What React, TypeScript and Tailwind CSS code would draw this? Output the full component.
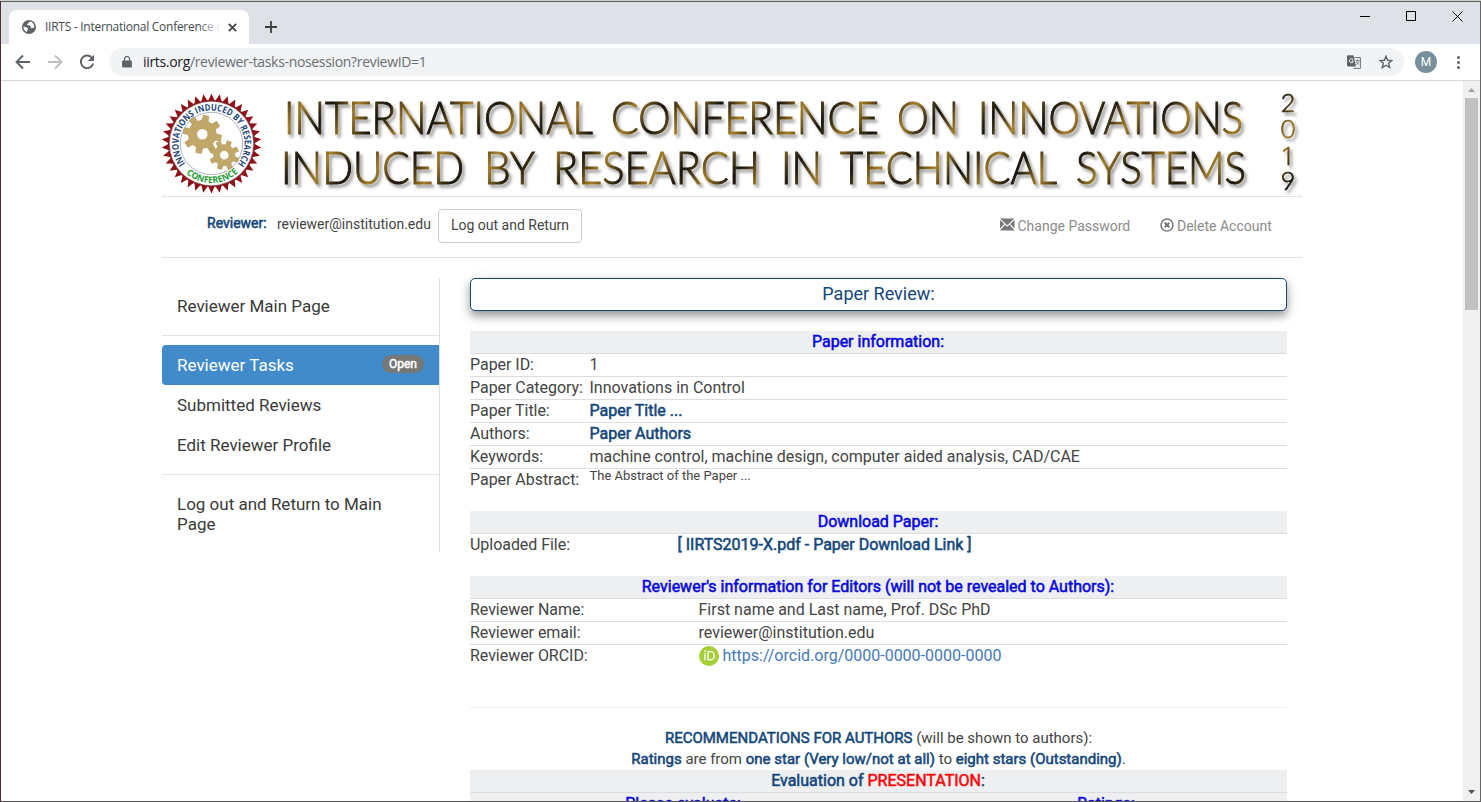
import React from "react";

const BOLD = "[-webkit-text-stroke:0.55px]";

function gearPath(cx: number, cy: number, teeth: number, outer: number, root: number, hole: number, turn: number) {
  const pts: string[] = [];
  const step = (Math.PI * 2) / teeth;
  for (let i = 0; i < teeth; i++) {
    const a = turn + i * step;
    const corners: [number, number][] = [
      [root, a - step * 0.3],
      [outer, a - step * 0.19],
      [outer, a + step * 0.19],
      [root, a + step * 0.3],
    ];
    corners.forEach(([r, t]) => pts.push(`${(cx + r * Math.cos(t)).toFixed(2)} ${(cy + r * Math.sin(t)).toFixed(2)}`));
  }
  return `M${pts.join("L")}ZM${cx - hole} ${cy}a${hole} ${hole} 0 1 0 ${hole * 2} 0a${hole} ${hole} 0 1 0 ${-hole * 2} 0Z`;
}

function sealPath(cx: number, cy: number, teeth: number, outer: number, root: number) {
  const pts: string[] = [];
  for (let i = 0; i < teeth * 2; i++) {
    const a = -Math.PI / 2 + (i * Math.PI) / teeth;
    const r = i % 2 ? root : outer;
    pts.push(`${(cx + r * Math.cos(a)).toFixed(2)} ${(cy + r * Math.sin(a)).toFixed(2)}`);
  }
  return `M${pts.join("L")}Z`;
}

const WORDS: [string, number, number, number][] = [
  ["INTERNATIONAL", 284, 309, 133.5],
  ["CONFERENCE", 611, 268, 133.5],
  ["ON", 897, 62, 133.5],
  ["INNOVATIONS", 978, 265, 133.5],
  ["INDUCED", 281, 183, 184],
  ["BY", 484, 51, 184],
  ["RESEARCH", 553, 207, 184],
  ["IN", 781, 41, 184],
  ["TECHNICAL", 840, 217, 184],
  ["SYSTEMS", 1076, 170, 184],
];

const YEAR: [string, number][] = [["2", 112], ["0", 138], ["1", 164.5], ["9", 190]];

function Banner() {
  return (
    <svg width="1140" height="115" viewBox="162 81 1140 115" className="block shrink-0">
      <defs>
        <linearGradient id="gold" gradientUnits="userSpaceOnUse" x1="0" y1="0" x2="21" y2="12" spreadMethod="reflect">
          <stop offset="0" stopColor="#15130d" />
          <stop offset="0.35" stopColor="#3d3012" />
          <stop offset="0.7" stopColor="#7a5b1b" />
          <stop offset="1" stopColor="#a47e2c" />
        </linearGradient>
        <filter id="drop" x="-5%" y="-20%" width="110%" height="150%">
          <feDropShadow dx="2.5" dy="3" stdDeviation="1.6" floodColor="#000" floodOpacity="0.42" />
        </filter>
        <path id="arcTop" d="M185.300 163.600A33 33 0 1 1 237.700 163.600" />
        <path id="arcBottom" d="M175.500 159.750A39.500 39.500 0 0 0 247.500 159.750" />
      </defs>
      <path d={sealPath(211.5, 143.5, 38, 50, 42.4)} fill="#8f1218" />
      <circle cx="211.5" cy="143.5" r="43.6" fill="#8f1218" />
      <circle cx="211.5" cy="143.5" r="42" fill="#fff" stroke="#8b95a5" strokeWidth="0.5" />
      <circle cx="211.5" cy="143.5" r="31.2" fill="none" stroke="#8b95a5" strokeWidth="0.7" />
      <g fill="#c2a868" fillRule="evenodd" stroke="#a98f50" strokeWidth="0.5">
        <path d={gearPath(202.3, 134.3, 8, 19.3, 14, 5.6, 0.2)} />
        <path d={gearPath(224.3, 155.2, 8, 14.8, 10.6, 4.6, 0.35)} />
      </g>
      <g fontFamily="Open Sans, sans-serif" fontSize="9.2" fontWeight="700">
        <text fill="#23457b">
          <textPath href="#arcTop" textLength="147" lengthAdjust="spacingAndGlyphs">INNOVATIONS INDUCED BY RESEARCH</textPath>
        </text>
        <text fill="#1f9a35" fontSize="9">
          <textPath href="#arcBottom" startOffset="17.500" textLength="57" lengthAdjust="spacingAndGlyphs">CONFERENCE</textPath>
        </text>
      </g>
      <g fill="url(#gold)" stroke="url(#gold)" strokeWidth="1" filter="url(#drop)" fontFamily="Lato, sans-serif" fontWeight="300">
        {WORDS.map(([word, x, w, y]) => (
          <text key={word} x={x} y={y} fontSize="45.2" textLength={w} lengthAdjust="spacingAndGlyphs">{word}</text>
        ))}
        {YEAR.map(([n, y]) => (
          <text key={n} x="1288" y={y} fontSize="25" strokeWidth="0.7" textAnchor="middle" fontFamily={n === "1" ? "Open Sans, sans-serif" : "Lato, sans-serif"}>{n}</text>
        ))}
      </g>
    </svg>
  );
}

function Browser() {
  return (
    <div className="shrink-0 font-['Open_Sans',sans-serif]">
      <div className="flex h-[42px] bg-[#dee1e6] pl-2">
        <div className="mt-2 flex h-[34px] w-[240px] items-center rounded-t-lg bg-white pl-[13px]">
          <svg width="14" height="14" viewBox="0 0 14 14">
            <circle cx="7" cy="7" r="7" fill="#5f6368" />
            <path d="M8.2 1.5c-.5.8-2 1-2 1.800c0 .8-1.200.6-1.200 1.400 0 1 2.800.3 3.600 1.500.7 1-.4 1.800.600 2 .9.2 1.500-.7 2.800-.3 1-2.500-.7-5.800-3.800-6.400zM1.500 6.500c1.500.2 2.500.7 3.600 1.200 1.200.5 1 1.500.4 2.200-.5.6-.2 1.500-.5 2.200C2.800 11.300 1.200 9 1.500 6.500z" fill="#fff" />
          </svg>
          <div className="relative ml-[9px] w-[176px] overflow-hidden whitespace-nowrap text-[12px] leading-4 tracking-[-0.27px] text-[#45494d]">
            IIRTS - International Conference on
            <div className="absolute inset-y-0 right-0 w-[22px] bg-gradient-to-r from-transparent to-white" />
          </div>
          <svg className="ml-[7px]" width="9" height="9" viewBox="0 0 9 9" stroke="#3c4043" strokeWidth="1.7">
            <path d="M.8.8l7.400 7.400M8.200.8L.8 8.200" />
          </svg>
        </div>
        <svg className="ml-[16px] mt-[19px]" width="12" height="12" viewBox="0 0 12 12" stroke="#3c4043" strokeWidth="1.8">
          <path d="M6 0v12M0 6h12" />
        </svg>
        <div className="ml-auto flex items-start gap-[36px] pr-[17px] pt-[9px]">
          <svg width="10" height="10" viewBox="0 0 10 10" stroke="#000"><path d="M0 5.500h10" /></svg>
          <svg width="10" height="10" viewBox="0 0 10 10" stroke="#000" fill="none"><path d="M.5.5h9v9h-9z" /></svg>
          <svg width="11" height="11" viewBox="0 0 11 11" stroke="#000"><path d="M.5.5l10 10M10.500.5L.5 10.500" /></svg>
        </div>
      </div>
      <div className="flex h-[37px] items-center border-b border-[#d5d7da] bg-white pl-[14px]">
        <svg width="16" height="16" viewBox="0 0 16 16" fill="none" stroke="#5f6368" strokeWidth="1.9"><path d="M15 8H2M8 1.500L1.500 8L8 14.500" /></svg>
        <svg className="ml-4" width="16" height="16" viewBox="0 0 16 16" fill="none" stroke="#bcbec1" strokeWidth="1.900"><path d="M1 8h13M8 1.500L14.500 8L8 14.500" /></svg>
        <svg className="ml-4" width="16" height="16" viewBox="0 0 16 16"><path d="M13.300 4.200A6.300 6.300 0 1 0 14.200 9.500" fill="none" stroke="#5f6368" strokeWidth="1.900" /><path d="M15 .8v6.200H8.800z" fill="#5f6368" /></svg>
        <div className="ml-[14px] flex h-7 w-[1295px] items-center rounded-full bg-[#f1f3f4] pl-[13px]">
          <svg width="10" height="12" viewBox="0 0 10 12"><path d="M1 4.500h8a.9.9 0 0 1 .9.900v5.200a.9.9 0 0 1-.9.900H1a.9.9 0 0 1-.9-.9V5.400a.9.9 0 0 1 .9-.9z" fill="#5f6368" /><path d="M2.500 5V3a2.500 2.500 0 0 1 5 0v2" fill="none" stroke="#5f6368" strokeWidth="1.200" /></svg>
          <div className="ml-[11px] whitespace-nowrap text-[14px] leading-5 tracking-[-0.33px] text-[#6b6f73]">
            <span className="text-[#202124]">iirts.org</span>/reviewer-tasks-nosession?reviewID=1
          </div>
          <svg className="ml-auto" width="14" height="14" viewBox="0 0 14 14">
            <path d="M7.500 2.600h5.900v10.800H6.500" fill="#f1f3f4" stroke="#6b6f73" />
            <path d="M0 1.200A1 1 0 0 1 1 .2h5.400l2.700 11.200H1a1 1 0 0 1-1-1z" fill="#5f6368" />
            <path d="M6 4.500a2 2 0 1 0 .4 1.500H4.500" fill="none" stroke="#fff" strokeWidth=".9" />
            <path d="M8.700 5.500h3.800M10.500 4.500v1M9 6c.4 1.500 1.500 2.800 3 3.500M12 6c-.4 1.700-1.400 3-2.700 3.800" fill="none" stroke="#6b6f73" strokeWidth=".8" />
          </svg>
          <svg className="ml-[18px] mr-[11px]" width="14" height="14" viewBox="0 0 14 14" fill="none" stroke="#5f6368" strokeWidth="1.400"><path d="M7 1.300l1.600 4 4.300.3-3.300 2.700 1.100 4.200L7 10.200l-3.700 2.300 1.100-4.200L1.100 5.600l4.300-.3z" /></svg>
        </div>
        <div className="ml-[11px] flex size-[22px] items-center justify-center rounded-full bg-[#78909c] font-['Roboto',sans-serif] text-[12px] text-white">M</div>
        <div className="ml-[20px] flex flex-col gap-[2px]">
          <span className="size-[3px] rounded-full bg-[#5f6368]" />
          <span className="size-[3px] rounded-full bg-[#5f6368]" />
          <span className="size-[3px] rounded-full bg-[#5f6368]" />
        </div>
      </div>
    </div>
  );
}

function Account() {
  return (
    <div className="flex h-[62px] shrink-0 border-y border-[#e3e3e3] text-[14px] leading-5 text-[#444]">
      <div className={`ml-[45px] mt-[16px] w-[70px] text-[#14477a] ${BOLD}`}>Reviewer:</div>
      <div className="mt-[17px] w-[161px]">reviewer@institution.edu</div>
      <div className="mt-[12px] flex h-[34px] w-[144px] items-center justify-center rounded-[4px] border border-[#ccc] pb-[2px]">Log out and Return</div>
      <div className="ml-[418px] mt-[19px] flex text-[#8b8b8b]">
        <svg className="mr-[3px] mt-[2px]" width="14.500" height="13" viewBox="0 0 14.500 13" fill="#777">
          <path d="M0 .5h14.500L7.250 7.200zM0 1.900l4.300 4.100L0 10.600zM14.500 1.900v8.700L10.200 6zM5.100 6.800l2.150 2 2.150-2 5.100 5.400v.3H0v-.3z" />
        </svg>
        <span className="w-[142.500px]">Change Password</span>
        <svg className="mr-[3px] mt-[2px]" width="14" height="14" viewBox="0 0 14 14" fill="none" stroke="#777">
          <circle cx="7" cy="7" r="6" strokeWidth="1.500" />
          <path d="M4.700 4.700l4.600 4.600M9.300 4.700L4.700 9.300" strokeWidth="2" />
        </svg>
        <span>Delete Account</span>
      </div>
    </div>
  );
}

function Sidebar() {
  return (
    <div className="h-[274px] w-[278px] shrink-0 border-r border-[#ddd] text-[17px] leading-5 text-[#3a3a3a]">
      <div className="px-[15px] pt-[18px]">Reviewer Main Page</div>
      <div className="mt-[19px] h-px bg-[#e3e3e3]" />
      <div className="mt-[9px] flex h-10 items-center justify-between rounded-l-[4px] bg-[#428bca] pl-[15px] pr-[15px] text-white">
        <span>Reviewer Tasks</span>
        <span className="-mt-[2px] flex h-[18px] w-[42px] items-center justify-center rounded-full bg-[#777] text-[12px] [-webkit-text-stroke:0.5px]">Open</span>
      </div>
      <div className="px-[15px] py-[10px]">Submitted Reviews</div>
      <div className="px-[15px] py-[10px]">Edit Reviewer Profile</div>
      <div className="mt-[9px] h-px bg-[#e3e3e3]" />
      <div className="px-[15px] pt-[19px]">Log out and Return to Main Page</div>
    </div>
  );
}

function Head({ children }: { children: React.ReactNode }) {
  return <div className={`h-[23px] border-b border-[#ddd] bg-[#eeeff1] pr-px text-center text-[#0808dc] ${BOLD}`}>{children}</div>;
}

function Row({ label, labelClass, last, children }: { label: string; labelClass: string; last?: boolean; children: React.ReactNode }) {
  return (
    <div className={`flex h-[23px] whitespace-nowrap ${last ? "" : "border-b border-[#ddd]"}`}>
      <div className={`shrink-0 tracking-[-0.04px] ${labelClass}`}>{label}</div>
      {children}
    </div>
  );
}

function Review() {
  const a = "w-[119.500px]";
  const b = "w-[228.500px]";
  return (
    <div className="ml-[30px] w-[817px] shrink-0 text-[16px] leading-[22px] text-[#444]">
      <div className="h-[33px] rounded-[5px] border border-[#14477a] bg-white text-center text-[18px] leading-[30px] text-[#14477a] shadow-[0_5px_8px_rgba(0,0,0,0.35),0_3px_16px_rgba(0,0,0,0.1)]">Paper Review:</div>
      <div className="mt-5">
        <Head>Paper information:</Head>
        <Row label="Paper ID:" labelClass={a}>1</Row>
        <Row label="Paper Category:" labelClass={a}>Innovations in Control</Row>
        <Row label="Paper Title:" labelClass={a}><span className={`text-[#14477a] ${BOLD}`}>Paper Title ...</span></Row>
        <Row label="Authors:" labelClass={a}><span className={`text-[#14477a] ${BOLD}`}>Paper Authors</span></Row>
        <Row label="Keywords:" labelClass={a}>machine control, machine design, computer aided analysis, CAD/CAE</Row>
        <Row label="Paper Abstract:" labelClass={a} last><span className="text-[13px] leading-[14px]">The Abstract of the Paper ...</span></Row>
      </div>
      <div className="mt-[19px]">
        <Head>Download Paper:</Head>
        <Row label="Uploaded File:" labelClass="w-[207.500px]" last><span className={`text-[#14477a] ${BOLD}`}>[ IIRTS2019-X.pdf - Paper Download Link ]</span></Row>
      </div>
      <div className="mt-[19px]">
        <Head>Reviewer's information for Editors (will not be revealed to Authors):</Head>
        <Row label="Reviewer Name:" labelClass={b}>First name and Last name, Prof. DSc PhD</Row>
        <Row label="Reviewer email:" labelClass={b}>reviewer@institution.edu</Row>
        <Row label="Reviewer ORCID:" labelClass={b} last>
          <svg className="mr-[4px] mt-px shrink-0" width="20" height="20" viewBox="0 0 20 20">
            <circle cx="10" cy="10" r="10" fill="#a6ce39" />
            <path d="M6 7.200v7.300" stroke="#fff" strokeWidth="1.300" />
            <circle cx="6" cy="5.200" r=".9" fill="#fff" />
            <path d="M9 5.700h2.500a3.800 4.050 0 0 1 0 8.100H9z" fill="none" stroke="#fff" strokeWidth="1.300" />
          </svg>
          <span className="text-[#4479b3]">https://orcid.org/0000-0000-0000-0000</span>
        </Row>
      </div>
      <div className="mt-[39px] h-px bg-[#eee]" />
      <div className="mt-5 text-center text-[15px] leading-[21px]">
        <div><span className={`text-[#14477a] ${BOLD}`}>RECOMMENDATIONS FOR AUTHORS</span> (will be shown to authors):</div>
        <div>
          <span className={`text-[#14477a] ${BOLD}`}>Ratings</span> are from <span className={`text-[#14477a] ${BOLD}`}>one star (Very low/not at all)</span> to <span className={`text-[#14477a] ${BOLD}`}>eight stars (Outstanding)</span>.
        </div>
      </div>
      <div className={`h-[23px] border-b border-[#ddd] bg-[#eeeff1] pr-px text-center text-[#14477a] ${BOLD}`}>
        Evaluation of <span className="text-[#f80808]">PRESENTATION</span>:
      </div>
      <div className={`flex h-[23px] bg-[#eeeff1] text-center text-[#0808dc] ${BOLD}`}>
        <div className="w-[426px] shrink-0">Please evaluate:</div>
        <div className="w-[391px] pl-[29px]">Ratings:</div>
      </div>
    </div>
  );
}

export default function App() {
  return (
    <div className="h-[802px] w-[1481px] overflow-hidden bg-[#ccd2cc] pt-px font-['Roboto',sans-serif]">
      <div className="flex h-[801px] flex-col overflow-hidden border border-l-[#552a30] border-t-[#5c5f5c] border-r-[#666] border-b-[#555] bg-white">
        <Browser />
        <div className="flex min-h-0 flex-1">
          <div className="flex min-w-0 flex-1 flex-col overflow-hidden pl-[161px]">
            <div className="flex w-[1140px] flex-col">
              <Banner />
              <Account />
              <div className="mt-5 flex items-start">
                <Sidebar />
                <Review />
              </div>
            </div>
          </div>
          <div className="flex w-[17px] shrink-0 flex-col items-center bg-[#f0f0f0]">
            <svg className="mt-[7px]" width="7" height="4" viewBox="0 0 7 4" fill="#a3a3a3"><path d="M0 4L3.500 0L7 4z" /></svg>
            <div className="mt-[6px] h-[212px] w-[13px] bg-[#c1c1c1]" />
            <svg className="mb-[7px] mt-auto" width="7" height="4" viewBox="0 0 7 4" fill="#505050"><path d="M0 0L3.500 4L7 0z" /></svg>
          </div>
        </div>
      </div>
    </div>
  );
}
